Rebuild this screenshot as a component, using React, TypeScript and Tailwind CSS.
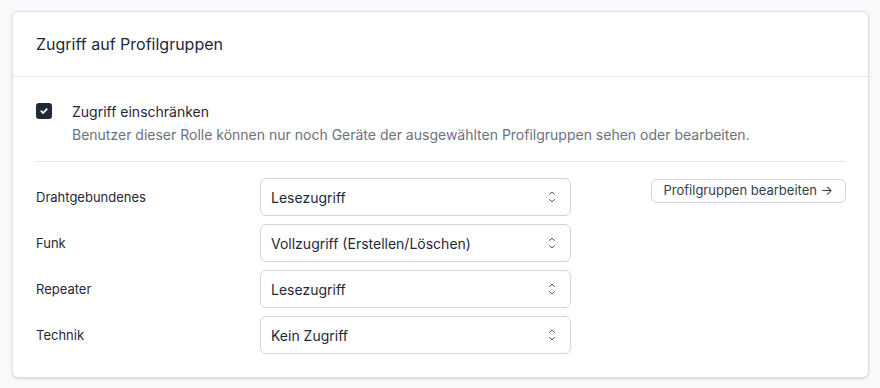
import React from "react";

const rows = [
  { label: "Drahtgebundenes", value: "Lesezugriff" },
  { label: "Funk", value: "Vollzugriff (Erstellen/Löschen)" },
  { label: "Repeater", value: "Lesezugriff" },
  { label: "Technik", value: "Kein Zugriff" },
];

function Chevrons() {
  return (
    <svg width="10" height="16" viewBox="0 0 10 16" fill="none" stroke="#4b5563" strokeWidth="1" strokeLinecap="round" strokeLinejoin="round">
      <path d="M2.5 5.5 L5 3 L7.5 5.5" />
      <path d="M2.5 10.5 L5 13 L7.5 10.5" />
    </svg>
  );
}

export default function App() {
  return (
    <div className="min-h-[388px] w-[880px] bg-[#f8f9fa] pt-[11px] pl-3 pr-[11px] pb-[10px] font-['Inter',sans-serif]">
      <div className="rounded-md border border-[#dcdfe4] bg-white shadow-sm">
        <div className="flex h-[65px] items-center border-b border-[#e5e7eb] pl-[23px] pr-6">
          <h2 className="text-[16px] text-[#1f2937]">Zugriff auf Profilgruppen</h2>
        </div>
        <div className="pl-[23px] pr-[22px] pt-[25px] pb-[23px]">
          <div className="flex items-start gap-5">
            <div className="mt-[1px] flex h-4 w-4 items-center justify-center rounded-[3px] bg-[#1f2937]">
              <svg width="10" height="10" viewBox="0 0 10 10" fill="none" stroke="white" strokeWidth="1.8" strokeLinecap="round" strokeLinejoin="round">
                <path d="M2.3 5.2 L4.2 7 L7.8 3.2" />
              </svg>
            </div>
            <div>
              <div className="text-[14px] leading-5 text-[#1f2937]">Zugriff einschränken</div>
              <div className="mt-[3px] text-[14px] leading-5 text-[#6b7280]">
                Benutzer dieser Rolle können nur noch Geräte der ausgewählten Profilgruppen sehen oder bearbeiten.
              </div>
            </div>
          </div>
          <div className="mt-4 mb-4 border-t border-[#e5e7eb]" />
          <div className="flex items-start">
            <div className="flex flex-col gap-2">
              {rows.map((r) => (
                <div key={r.label} className="flex items-center">
                  <div className="w-[224px] pt-[2px] text-[13px] text-[#1f2937]">{r.label}</div>
                  <div className="flex h-[38px] w-[311px] items-center justify-between rounded-md border border-[#d1d5db] pl-[10px] pr-[13px] text-[14px] text-[#1f2937]">
                    <span>{r.value}</span>
                    <Chevrons />
                  </div>
                </div>
              ))}
            </div>
            <div className="ml-auto pt-[1px]">
              <button className="flex h-[24px] items-center rounded-md border border-[#d1d5db] px-[12px] text-[13px] text-[#374151]">
                Profilgruppen bearbeiten →
              </button>
            </div>
          </div>
        </div>
      </div>
    </div>
  );
}
